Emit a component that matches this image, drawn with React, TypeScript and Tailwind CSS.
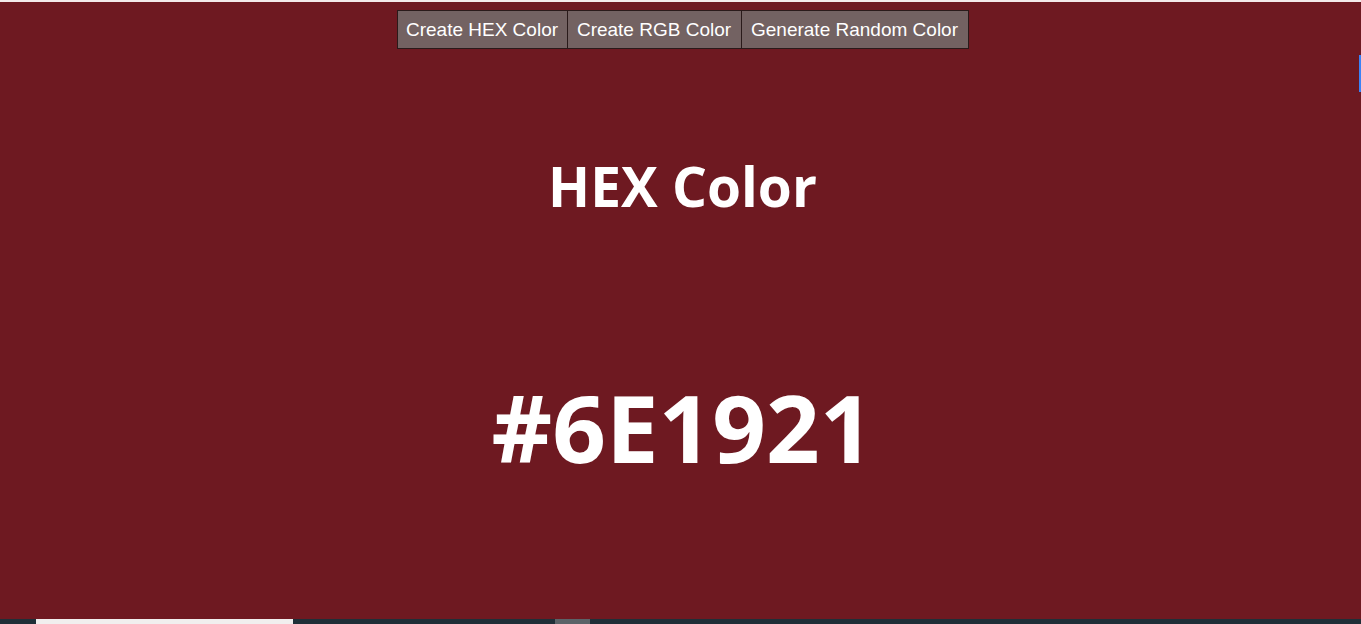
export default function App() {
  const btn =
    "h-[39px] px-[8px] bg-[#736262] text-white text-[19px] border border-[#2a1a1a] font-['Liberation_Sans',Arial,sans-serif] leading-none";

  return (
    <div className="w-[1361px] h-[624px] overflow-hidden flex flex-col bg-[#6E1921]">
      <div className="h-[2px] bg-[#f3eaea]" />
      <main className="relative flex-1 flex flex-col items-center">
        <div className="mt-[8px] flex ml-[4px]">
          <button className={`${btn} w-[171px]`}>Create HEX Color</button>
          <button className={`${btn} w-[174px] border-l-0`}>Create RGB Color</button>
          <button className={`${btn} w-[227px] border-l-0`}>Generate Random Color</button>
        </div>
        <h1 className="mt-[109px] ml-[4px] text-white font-bold text-[55px] leading-none font-['Open_Sans','Noto_Sans',sans-serif]">
          HEX Color
        </h1>
        <h2 className="mt-[167px] ml-[4px] text-white font-bold text-[94px] leading-none font-['Open_Sans','Noto_Sans',sans-serif]">
          #6E1921
        </h2>
        <div className="absolute right-0 top-[53px] w-[2px] h-[37px] bg-[#3b82f6]" />
      </main>
      <div className="h-[5px] bg-[#1f2f38] flex">
        <div className="ml-[36px] w-[257px] bg-[#f1eeee]" />
        <div className="ml-[262px] w-[35px] bg-[#5b6368]" />
      </div>
    </div>
  );
}
